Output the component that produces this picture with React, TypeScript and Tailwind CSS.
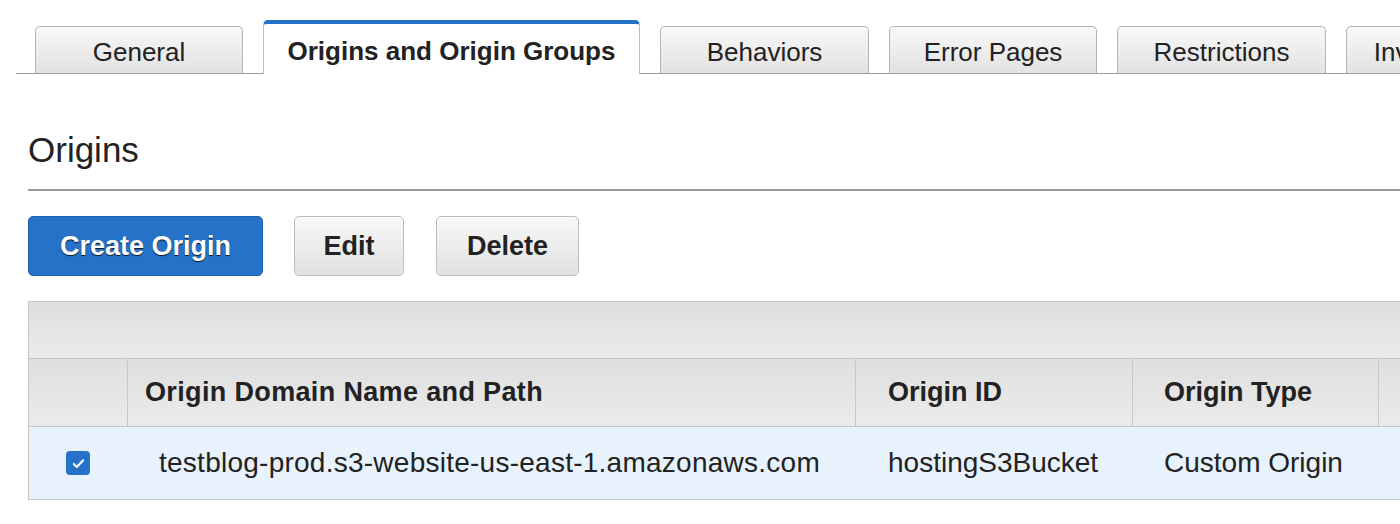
import React from 'react';

const tabs = [
  { label: 'General', width: 'w-[208px]' },
  { label: 'Origins and Origin Groups', width: 'w-[377px]', active: true },
  { label: 'Behaviors', width: 'w-[209px]' },
  { label: 'Error Pages', width: 'w-[208px]' },
  { label: 'Restrictions', width: 'w-[209px]' },
  { label: 'Invalidations', width: 'w-[200px]' },
];

const Tabs = () => (
  <div className="ml-[16px] pl-[19px] pt-[20px] flex items-end gap-5 border-b border-[#9d9d9d]">
    {tabs.map((tab) =>
      tab.active ? (
        <div
          key={tab.label}
          className={`${tab.width} shrink-0 h-[54px] -mb-px pt-[4px] flex items-center justify-center bg-white border border-b-0 border-[#bdbdbd] border-t-[4px] border-t-[#2672c9] rounded-t-[5px] text-[26px] font-bold text-[#222]`}
        >
          {tab.label}
        </div>
      ) : (
        <div
          key={tab.label}
          className={`${tab.width} shrink-0 h-[47px] pt-[5px] flex items-center justify-center bg-linear-to-b from-[#f8f8f8] to-[#e2e2e2] border border-b-0 border-[#b5b5b5] rounded-t-[5px] text-[26px] text-[#222]`}
        >
          <span className="whitespace-nowrap">{tab.label}</span>
        </div>
      )
    )}
  </div>
);

const GrayButton = ({ label, width }: { label: string; width: string }) => (
  <button
    className={`${width} h-[60px] flex items-center justify-center rounded-[5px] border border-[#bcbcbc] bg-linear-to-b from-[#f8f8f8] to-[#e1e1e1] text-[27px] font-bold text-[#222]`}
  >
    {label}
  </button>
);

const Checkbox = () => (
  <div className="w-[24px] h-[24px] rounded-[4px] bg-[#2672c9] flex items-center justify-center">
    <svg width="15" height="15" viewBox="0 0 16 16" fill="none">
      <path d="M3 8.5l3.2 3.2L13 4.5" stroke="white" strokeWidth="2.2" strokeLinecap="round" strokeLinejoin="round" />
    </svg>
  </div>
);

export default function App() {
  return (
    <div
      className="w-[1400px] h-[524px] bg-white overflow-hidden text-[#222]"
      style={{ fontFamily: '"Liberation Sans", Arial, Helvetica, sans-serif' }}
    >
      <Tabs />

      <div className="pl-[28px]">
        <h2 className="mt-[56px] text-[35px] leading-[40px] font-normal text-[#222]">Origins</h2>
        <div className="mt-[19px] h-[2px] bg-[#9a9a9a]" />

        <div className="mt-[25px] flex items-center">
          <button className="w-[235px] h-[60px] flex items-center justify-center rounded-[5px] border border-[#1f5fab] bg-[#2672c9] text-[27px] font-bold text-white [text-shadow:0_1px_1px_rgba(0,0,0,0.85)]">
            Create Origin
          </button>
          <div className="ml-[31px]">
            <GrayButton label="Edit" width="w-[110px]" />
          </div>
          <div className="ml-[32px]">
            <GrayButton label="Delete" width="w-[143px]" />
          </div>
        </div>

        <div className="mt-[25px] w-[1500px] border-l border-t border-[#c4c4c4]">
          <div className="h-[57px] bg-linear-to-b from-[#dedede] to-[#ebebeb] border-b border-[#c4c4c4]" />

          <div className="h-[68px] flex bg-linear-to-b from-[#dfdfdf] to-[#ebebeb] border-b border-[#c2c2c2] text-[27px] font-bold text-[#222]">
            <div className="w-[98px] shrink-0" />
            <div className="w-[728px] shrink-0 border-l border-[#c8c8c8] pl-[17px] flex items-center tracking-[0.35px]">
              Origin Domain Name and Path
            </div>
            <div className="w-[277px] shrink-0 border-l border-[#c8c8c8] pl-[32px] flex items-center">
              Origin ID
            </div>
            <div className="w-[246px] shrink-0 border-l border-[#c8c8c8] pl-[31px] flex items-center">
              Origin Type
            </div>
            <div className="flex-1 border-l border-[#c8c8c8]" />
          </div>

          <div className="h-[73px] flex items-center bg-[#e7f2fd] border-b border-[#c8c8c8] text-[28px] text-[#222]">
            <div className="w-[98px] shrink-0 flex items-center justify-center">
              <Checkbox />
            </div>
            <div className="w-[728px] shrink-0 pl-[32px] whitespace-nowrap tracking-[0.25px]">
              testblog-prod.s3-website-us-east-1.amazonaws.com
            </div>
            <div className="w-[277px] shrink-0 pl-[33px]">hostingS3Bucket</div>
            <div className="w-[246px] shrink-0 pl-[32px]">Custom Origin</div>
          </div>
        </div>
      </div>
    </div>
  );
}
